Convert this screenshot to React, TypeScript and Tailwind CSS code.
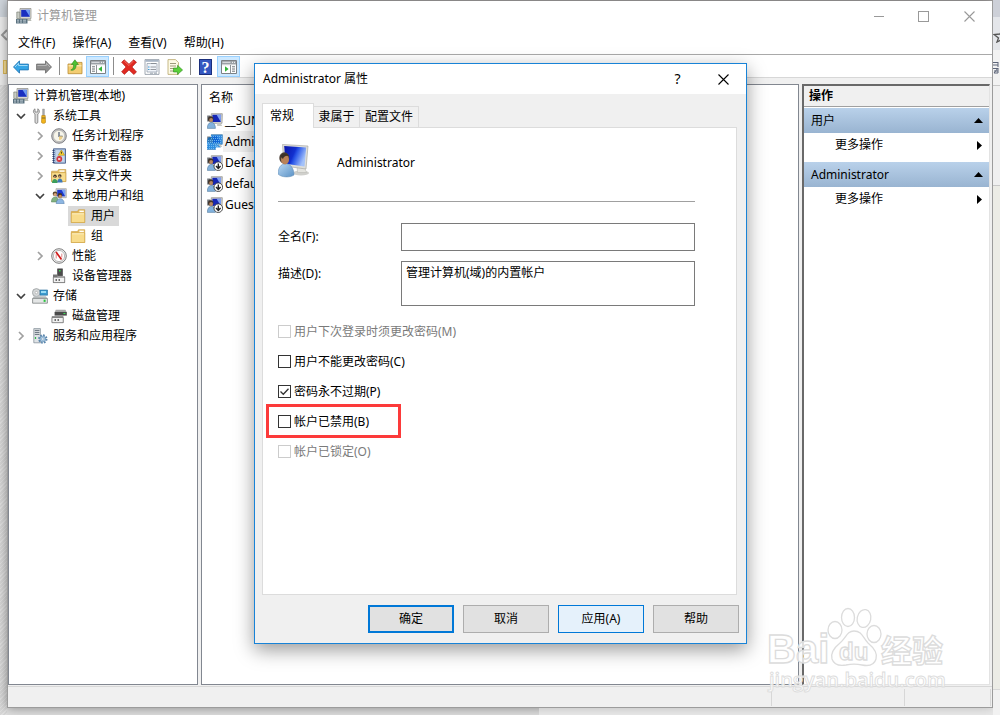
import { useState, type ReactNode } from "react";

/* ---------- icons ---------- */

function Svg({ children, size = "size-4" }: { children: ReactNode; size?: string }) {
  return (
    <svg viewBox="0 0 16 16" className={`${size} shrink-0`} aria-hidden="true">
      {children}
    </svg>
  );
}

function ComputerIcon() {
  return (
    <Svg>
      <path d="M4 .5h11v10H4z" fill="#d9d9d2" stroke="#8d8d86" strokeWidth=".7" />
      <path d="M5.2 1.8h8.6v7H5.2z" fill="#1a2fc0" />
      <path d="M9.5 1.8h4.3v7z" fill="#6f9bf2" />
      <path d="M10.5 10.5h4l1 2.5h-4z" fill="#b9bcb5" />
      <path d="M.8 4h3v6.5h-3z" fill="#c9ccc4" stroke="#6b7268" strokeWidth=".6" />
      <path d="M0 11h11.5v4.5H0z" fill="#5b7280" />
      <path d="M1 12.2h2M4 12.2h2M7 12.2h3M1 14h2M4 14h2M7 14h3" stroke="#c6d2d8" strokeWidth=".9" />
    </Svg>
  );
}

function ToolsIcon() {
  return (
    <Svg>
      <path d="M3 .8C1 2 .8 4.6 3 6v8.2c0 1.6 2.8 1.6 2.8 0V6C8 4.8 7.8 2 5.8.8V4H3z" fill="#dcdcdc" stroke="#777" strokeWidth=".8" />
      <path d="M10.6 1h1.8v6.5h-1.8z" fill="#aaa" stroke="#888" strokeWidth=".4" />
      <path d="M9.8 7.5h3.4l.3 6.8c0 1.4-4 1.4-4 0z" fill="#f2b41c" stroke="#b27c0b" strokeWidth=".6" />
      <path d="M9.8 10h3.6" stroke="#7c6a30" />
    </Svg>
  );
}

function ClockIcon() {
  return (
    <Svg>
      <circle cx="8" cy="8" r="7.3" fill="#c4c4c4" stroke="#77777c" strokeWidth=".9" />
      <circle cx="8" cy="8" r="5.6" fill="#f7f5ea" stroke="#9a9a9a" strokeWidth=".4" />
      <path d="M8 4v4.3h3.6" fill="none" stroke="#4e5a6e" strokeWidth="1.2" />
      <path d="M8 8.3h3.6A3.6 3.6 0 0 1 8 12z" fill="#efd18a" />
    </Svg>
  );
}

function EventIcon() {
  return (
    <Svg>
      <path d="M2.5.8h12v14.4h-12z" fill="#a9c1df" stroke="#4c628c" strokeWidth=".9" />
      <path d="M5 3h8M5 5h8M5 7h8M5 9h8M5 11h8M5 13h8" stroke="#e8f0fa" strokeWidth=".8" />
      <path d="M2.5 2v13" stroke="#2c3f6d" strokeWidth="2" strokeDasharray="1 1" />
      <path d="M10.4 2l3.2 5.2H7.2z" fill="#ffd42a" stroke="#a47d00" strokeWidth=".5" />
      <path d="M10.4 3.7v2" stroke="#222" strokeWidth=".9" />
      <circle cx="8.3" cy="11" r="2.9" fill="#d2353c" />
      <path d="M7.2 9.9l2.2 2.2m0-2.2l-2.2 2.2" stroke="#fff" strokeWidth=".9" />
    </Svg>
  );
}

function FolderIcon() {
  return (
    <Svg>
      <path d="M1.3 3.6h6.2l1-1.9h6.2v12.8H1.3z" fill="#e8bf5f" stroke="#c9993a" strokeWidth=".6" />
      <path d="M9.4 2.6h4.4v1.6H9.4z" fill="#fff" />
      <path d="M1.3 5h13.4v9.5H1.3z" fill="#f8dc8c" stroke="#cfa245" strokeWidth=".6" />
      <path d="M2 5.8h12" stroke="#fdf0c2" />
    </Svg>
  );
}

function SharedIcon() {
  return (
    <Svg>
      <path d="M.6 3.2h6l1-1.700h7.200v12H.6z" fill="#e9c46a" stroke="#c0933a" strokeWidth=".6" />
      <path d="M8.500 2.400h5v1.400h-5z" fill="#fff" />
      <path d="M.6 4.600h14.200v9H.6z" fill="#f8dc8c" stroke="#c79a3f" strokeWidth=".6" />
      <circle cx="4" cy="8.3" r="1.7" fill="#3d3328" />
      <circle cx="8.8" cy="7.9" r="1.7" fill="#3d3328" />
      <path d="M1 15c0-5.500 5.600-5.500 5.600 0z" fill="#3c9e5b" />
      <path d="M6.200 14.500c0-5.500 5.400-5.500 5.400 0z" fill="#3c78b8" />
      <circle cx="3.8" cy="8.9" r="1" fill="#c99466" />
      <circle cx="8.6" cy="8.5" r="1" fill="#c99466" />
    </Svg>
  );
}

function UsersIcon() {
  return (
    <Svg>
      <path d="M5 .7h10.3v9H5z" fill="#dfdfda" stroke="#92928c" strokeWidth=".6" />
      <path d="M6.2 1.8h8v6.6h-8z" fill="#1c37cc" />
      <path d="M10.5 1.8h3.7v6.6z" fill="#7ba3f4" />
      <circle cx="4" cy="5.7" r="2.3" fill="#5a452f" />
      <circle cx="4.2" cy="6.5" r="1.6" fill="#d9a578" />
      <path d="M.4 14c0-6.8 7-6.8 7 0z" fill="#83b281" stroke="#527e55" strokeWidth=".5" />
      <circle cx="9" cy="7.4" r="2.3" fill="#463626" />
      <circle cx="9.2" cy="8.3" r="1.6" fill="#c98e62" />
      <path d="M5.2 15.7c0-6.7 8-6.7 8 0z" fill="#8db6e2" stroke="#4f76a3" strokeWidth=".5" />
    </Svg>
  );
}

function GaugeIcon() {
  return (
    <Svg>
      <circle cx="8" cy="8" r="7.3" fill="#efefef" stroke="#6e6e6e" strokeWidth=".9" />
      <circle cx="8" cy="8" r="5.6" fill="#fff" stroke="#9c9c9c" strokeWidth=".7" />
      <path d="M5.200 10.500V6.200M10.800 9.500V5.600" fill="none" stroke="#d88" strokeWidth="1" />
      <path d="M5 4l5.500 7.500" stroke="#d01919" strokeWidth="1.7" />
    </Svg>
  );
}

function DeviceIcon() {
  return (
    <Svg>
      <path d="M6.5.8h5v7h-5z" fill="#4b4b4b" stroke="#2e2e2e" strokeWidth=".5" />
      <path d="M8.8 2v1.6" stroke="#3bdc4e" strokeWidth="1.5" />
      <path d="M2 6.6h4.5v2H14V15H2z" fill="#777" />
      <path d="M2.3 9.2h11.4v5.4H2.3z" fill="#f1f1f1" stroke="#6f6f6f" strokeWidth=".7" />
      <path d="M5.2 11v2M8.2 11v2" stroke="#4e4e4e" strokeWidth="1.2" />
    </Svg>
  );
}

function StorageIcon() {
  return (
    <Svg>
      <circle cx="4.4" cy="4.6" r="4" fill="#d4d7d8" stroke="#84898b" strokeWidth=".6" />
      <circle cx="4.4" cy="4.6" r="1.2" fill="#fff" stroke="#888" strokeWidth=".4" />
      <path d="M8 2h7.6v5.2H8z" fill="#3c9bcf" stroke="#226a99" strokeWidth=".6" />
      <path d="M9 3h5v2H9z" fill="#9bdcf5" />
      <path d="M1.8 8.3h12l1.6 2.2H.6z" fill="#b9bebf" />
      <path d="M.6 10.4h14.8v4.8H.6z" fill="#e4e6e6" stroke="#6d7273" strokeWidth=".7" />
      <path d="M11.6 11.6h2v2.3h-2z" fill="#2cc340" />
    </Svg>
  );
}

function DiskIcon() {
  return (
    <Svg>
      <path d="M4.8 1.8h9.6l1.4 2.4H3.6z" fill="#a5a5a5" />
      <path d="M3.6 4h12.2v3.6H3.6z" fill="#4a4a4a" />
      <path d="M12.4 5.5h2" stroke="#40e058" strokeWidth="1.1" />
      <path d="M.8 8.2h11.6v6.6H.8z" fill="#777" />
      <path d="M1 9.5h11.2v5.2H1z" fill="#f1f1f1" stroke="#6f6f6f" strokeWidth=".7" />
      <path d="M4.2 11v2M7.2 11v2" stroke="#4e4e4e" strokeWidth="1.2" />
    </Svg>
  );
}

function ServiceIcon() {
  return (
    <Svg>
      <path d="M1.8.6h6.6v14.2H1.8z" fill="#dfe3e6" stroke="#7b8791" strokeWidth=".7" />
      <path d="M2.8 2.4h4.6M2.8 4.4h4.6M2.8 6.4h4.6" stroke="#56636e" strokeWidth=".9" />
      <path d="M3.500 9v2" stroke="#33b64a" strokeWidth="1.2" />
      <circle cx="10.8" cy="11" r="3.6" fill="none" stroke="#5a86ad" strokeWidth="2.2" strokeDasharray="1.6 1.2" />
      <circle cx="10.8" cy="11" r="2.9" fill="#a8c8e2" stroke="#5a86ad" strokeWidth=".6" />
      <circle cx="10.8" cy="11" r="1.2" fill="#fff" stroke="#5a86ad" strokeWidth=".5" />
    </Svg>
  );
}

function UserIcon({ kind }: { kind: "plain" | "disabled" | "selected" }) {
  return (
    <Svg>
      <path d="M4.3.7H15.300l-.3 9.600H4.3z" fill="#d9d9d4" stroke="#8b8b86" strokeWidth=".7" />
      <path d="M5.400 1.800h8.700l-.3 7.300H5.400z" fill="#1526b5" />
      <path d="M9.600 1.800h4.500l-.3 7.300z" fill="#7f9ff2" />
      <path d="M10 10.300h3.600l1.600 2.600h-5z" fill="#c7c8c2" />
      <path d="M.2 2.500h3.200v6H.2z" fill="#3a3f46" opacity=".7" />
      <circle cx="3.7" cy="5.9" r="2.7" fill="#3f342b" />
      <circle cx="4.1" cy="7" r="1.9" fill="#b98863" />
      <path d="M.3 15.400C.3 7.300 8.400 7.300 8.400 15.400z" fill="#82b2dd" stroke="#4c7092" strokeWidth=".5" />
      {kind === "disabled" && (
        <>
          <circle cx="11.3" cy="11.2" r="4.300" fill="#fff" stroke="#3d3d3d" strokeWidth=".9" />
          <path d="M11.300 8.400v4.800M9 11.100l2.300 2.300 2.300-2.300" fill="none" stroke="#222" strokeWidth="1.400" />
        </>
      )}
      {kind === "selected" && (
        <>
          <path d="M4 .4h11.700v10H11l3 3H9v2.200H0V7l1-3.500 3-.5z" fill="#0f7fe0" opacity=".72" />
          <path
            d="M4 2.500h11M4 4.500h11M1 6.500h14M1 8.500h14M0 10.500h14M0 12.500h12M0 14.500h9"
            stroke="#7fc4f5"
            strokeWidth=".8"
            strokeDasharray="1 1"
          />
        </>
      )}
    </Svg>
  );
}

function LargeUserIcon() {
  return (
    <svg viewBox="0 0 34 40" className="h-10 w-[34px] shrink-0" aria-hidden="true">
      <defs>
        <linearGradient id="screen" x1="0" y1="0" x2="1" y2=".4">
          <stop offset="0" stopColor="#0a14a8" />
          <stop offset=".5" stopColor="#1230cf" />
          <stop offset=".62" stopColor="#2c58e8" />
          <stop offset="1" stopColor="#a4c2fa" />
        </linearGradient>
        <linearGradient id="shirt" x1="0" y1="0" x2="1" y2="1">
          <stop offset="0" stopColor="#b9d8f3" />
          <stop offset="1" stopColor="#5b92c6" />
        </linearGradient>
      </defs>
      <ellipse cx="23" cy="30" rx="8" ry="2.500" fill="#d0d0cc" />
      <path d="M19 23h7l2.500 6.500h-9z" fill="#e4e4df" stroke="#b4b4ae" strokeWidth=".5" />
      <path d="M4.500 1.500l25.500 1.500-2 23-22-3z" fill="#dededa" stroke="#a0a09a" strokeWidth=".6" />
      <path d="M6.200 3l22 1.400-1.700 19-19-2.700z" fill="url(#screen)" />
      <path d="M0 31c0-14.500 16-13.500 16 1-4 2.800-12.500 2.600-16-1z" fill="url(#shirt)" stroke="#5a86b0" strokeWidth=".5" />
      <ellipse cx="6.300" cy="15" rx="5" ry="5.800" fill="#4a3d34" />
      <ellipse cx="7" cy="16.700" rx="4" ry="4.800" fill="#b98259" />
      <path d="M2.500 13.500c1.500-4 7-4 8.500-.5-3-1-5.500.5-6 3z" fill="#3d322a" />
    </svg>
  );
}

function ArrowIcon({ forward = false }: { forward?: boolean }) {
  return forward ? (
    <Svg>
      <path d="M15.500 8L9.500 1.800v3.300H.6v5.800h8.900v3.300z" fill="#8e8e8e" stroke="#686868" strokeWidth=".8" />
      <path d="M1.400 6.500h9V4.300L14 8" fill="none" stroke="#bbb" strokeWidth=".9" />
    </Svg>
  ) : (
    <Svg>
      <path d="M.5 8l6-6.200v3.300h8.900v5.800H6.500v3.300z" fill="#35a5e5" stroke="#1c6fae" strokeWidth=".8" />
      <path d="M14.600 6.500h-9V4.300L2 8" fill="none" stroke="#a9e0fb" strokeWidth=".9" />
    </Svg>
  );
}

function UpFolderIcon() {
  return (
    <Svg>
      <path d="M1 5h5l1-1.600h8v11.300H1z" fill="#f3cd72" stroke="#b98c32" strokeWidth=".8" />
      <path d="M1.500 6.800h13" stroke="#fdf0c0" />
      <path d="M3.800 11c2.400-.6 3-3 2.800-5.500H4.400L7.900.8l3.500 4.700H9.200c0 4-2 6.500-5.400 5.500z" fill="#4fc234" stroke="#2c861c" strokeWidth=".6" />
    </Svg>
  );
}

function PaneIcon({ right = false }: { right?: boolean }) {
  return (
    <Svg>
      <path d="M.5 1.500h15v13H.5z" fill="#fff" stroke="#7c8185" />
      <path d="M1 2h14v3H1z" fill="#9ba1a6" />
      <path d="M1.500 3.300h8" stroke="#e4e7e9" />
      <path d="M11 3.300h1M13 3.300h1" stroke="#fff" />
      <path d="M1 5.700h14" stroke="#c4c8cb" />
      {right ? (
        <>
          <path d="M9.500 6v8.500" stroke="#8f9498" />
          <path d="M11 7.800h3M11 10h3M11 12.200h3" stroke="#6e7478" />
          <path d="M4 7.200v5.600l3.600-2.800z" fill="#31b338" />
        </>
      ) : (
        <>
          <path d="M6.500 6v8.500" stroke="#8f9498" />
          <path d="M2 7.800h3M2 10h3M2 12.200h3" stroke="#6e7478" />
          <path d="M12 7.200v5.600L8.400 10z" fill="#31b338" />
        </>
      )}
    </Svg>
  );
}

function DeleteIcon() {
  return (
    <Svg>
      <path
        d="M3.200.8L8 5.200 12.600.8l2.900 2.400L11 8l4.500 5-2.700 2.500L8 10.900l-4.600 4.500L.6 12.800 5 8 .6 3.300z"
        fill="#e02a22"
        stroke="#a81410"
        strokeWidth=".6"
      />
      <path d="M3.200 2l4.800 4.500L12.400 2" fill="none" stroke="#f47c70" strokeWidth=".8" />
    </Svg>
  );
}

function PropertiesIcon() {
  return (
    <Svg>
      <path d="M1 .6h14v14.800H1z" fill="#fff" stroke="#8993a0" strokeWidth=".8" />
      <path d="M1.400 1h13.200v1.800H1.400z" fill="#a7b4c4" />
      <path d="M3 4.500h10v8.500H3z" fill="#f1f5fa" stroke="#8b96a3" strokeWidth=".7" />
      <path d="M7 4.500h5" stroke="#8a8f96" />
      <path d="M4 8h1.500M4 10.500h1.500" stroke="#3e9bd2" />
      <path d="M6.500 8h5.500M6.500 10.500h5.500" stroke="#8a8f96" strokeWidth=".9" />
      <path d="M6 14.200h3M10 14.200h3" stroke="#9aa5b0" />
    </Svg>
  );
}

function ExportIcon() {
  return (
    <Svg>
      <path d="M1 .6h7.500l3 3v11.800H1z" fill="#fdfae6" stroke="#b7a76b" strokeWidth=".8" />
      <path d="M3 4.500h6M3 7h6M3 9.500h4M3 12h4" stroke="#93906f" strokeWidth=".9" />
      <path d="M6.500 9h4V6.300L15.600 11l-5.100 4.500V13h-4z" fill="#5bd03a" stroke="#2d8c1f" strokeWidth=".6" />
    </Svg>
  );
}

function HelpIcon() {
  return (
    <span aria-hidden="true" className="grid h-4 w-[13px] place-items-center border border-[#1b2f7c] bg-[#3557c0] font-['Liberation_Serif',serif] text-base/4 font-bold text-white">
      ?
    </span>
  );
}

function Chevron({ open }: { open: boolean }) {
  return (
    <svg viewBox="0 0 10 10" className="size-2.5" aria-hidden="true">
      {open ? (
        <path d="M1 3l4 4 4-4" fill="none" stroke="#404040" strokeWidth="1.700" />
      ) : (
        <path d="M3 1l4 4-4 4" fill="none" stroke="#a0a0a0" strokeWidth="1.700" />
      )}
    </svg>
  );
}

function CloseGlyph() {
  return (
    <svg viewBox="0 0 11 11" className="size-[11px]" aria-hidden="true">
      <path d="M.5.5l10 10m0-10l-10 10" stroke="currentColor" strokeWidth="1.100" />
    </svg>
  );
}

/* ---------- tree ---------- */

type Node = { label: string; level: number; icon: ReactNode; open?: boolean; selected?: boolean };

const nodes: Node[] = [
  { label: "系统工具", level: 1, icon: <ToolsIcon />, open: true },
  { label: "任务计划程序", level: 2, icon: <ClockIcon />, open: false },
  { label: "事件查看器", level: 2, icon: <EventIcon />, open: false },
  { label: "共享文件夹", level: 2, icon: <SharedIcon />, open: false },
  { label: "本地用户和组", level: 2, icon: <UsersIcon />, open: true },
  { label: "用户", level: 3, icon: <FolderIcon />, selected: true },
  { label: "组", level: 3, icon: <FolderIcon /> },
  { label: "性能", level: 2, icon: <GaugeIcon />, open: false },
  { label: "设备管理器", level: 2, icon: <DeviceIcon /> },
  { label: "存储", level: 1, icon: <StorageIcon />, open: true },
  { label: "磁盘管理", level: 2, icon: <DiskIcon /> },
  { label: "服务和应用程序", level: 1, icon: <ServiceIcon />, open: false },
];

const indents = ["", "pl-0.5", "pl-[21px]", "pl-10"];

function Tree() {
  return (
    <nav aria-label="控制台树" className="w-[190px] shrink-0 border border-[#828790] bg-white pt-px">
      <div className="flex h-5 items-center gap-[5px] pl-1">
        <ComputerIcon />
        计算机管理(本地)
      </div>
      <ul>
        {nodes.map((n) => (
          <li key={n.label} className={`flex h-5 items-center ${indents[n.level]}`}>
            <span className="grid w-[19px] place-items-center">
              {n.open !== undefined && <Chevron open={n.open} />}
            </span>
            <span className={`flex h-5 items-center gap-[5px] pr-1 pl-0.5 ${n.selected ? "bg-[#d9d9d9]" : ""}`}>
              {n.icon}
              {n.label}
            </span>
          </li>
        ))}
      </ul>
    </nav>
  );
}

/* ---------- user list ---------- */

const users: { name: string; kind: "plain" | "disabled" | "selected" }[] = [
  { name: "__SUN", kind: "plain" },
  { name: "Admi", kind: "selected" },
  { name: "Defau", kind: "disabled" },
  { name: "defau", kind: "disabled" },
  { name: "Guest", kind: "disabled" },
];

function UserList() {
  return (
    <section className="min-w-0 flex-1 border border-[#828790] bg-white">
      <table className="w-full border-collapse text-left">
        <thead>
          <tr className="h-[25px]">
            <th className="pl-[7px] font-normal">名称</th>
          </tr>
        </thead>
        <tbody>
          {users.map((u) => (
            <tr key={u.name} className="h-[21px]">
              <td className="p-0 pl-[5px]">
                <span className="flex h-[21px] items-center">
                  <UserIcon kind={u.kind} />
                  <span className={`flex h-[21px] items-center pl-0.5 ${u.kind === "selected" ? "w-24 bg-[#f0f0f0]" : ""}`}>
                    {u.name}
                  </span>
                </span>
              </td>
            </tr>
          ))}
        </tbody>
      </table>
    </section>
  );
}

/* ---------- actions ---------- */

function ActionGroup({ title }: { title: string }) {
  return (
    <section className="mb-[5px]">
      <button type="button" className="flex h-[25px] w-full items-center justify-between bg-linear-to-b from-[#b9d1ea] to-[#99b4d1] pr-1.5 pl-[7px]">
        {title}
        <svg viewBox="0 0 9 5" className="h-[5px] w-[9px]" aria-hidden="true">
          <path d="M0 5l4.500-5L9 5z" />
        </svg>
      </button>
      <button type="button" className="flex h-6 w-full items-center justify-between pr-[7px] pl-[31px]">
        更多操作
        <svg viewBox="0 0 5 9" className="h-[9px] w-[5px]" aria-hidden="true">
          <path d="M0 0l5 4.500L0 9z" />
        </svg>
      </button>
    </section>
  );
}

function Actions() {
  return (
    <aside className="mr-0.5 w-[188px] shrink-0 border-t-2 border-r border-b border-l-2 border-t-[#696969] border-r-[#e3e3e3] border-b-[#e3e3e3] border-l-[#696969] bg-white">
      <h2 className="mb-px flex h-[21px] items-center border-b border-[#a0a0a0] bg-[#f0f0f0] pl-[5px] font-bold">操作</h2>
      <ActionGroup title="用户" />
      <ActionGroup title="Administrator" />
    </aside>
  );
}

/* ---------- dialog ---------- */

type Option = { id: string; label: string; checked?: boolean; disabled?: boolean; marked?: boolean };

const options: Option[] = [
  { id: "must-change", label: "用户下次登录时须更改密码(M)", disabled: true },
  { id: "cannot-change", label: "用户不能更改密码(C)" },
  { id: "never-expires", label: "密码永不过期(P)", checked: true },
  { id: "account-disabled", label: "帐户已禁用(B)", marked: true },
  { id: "account-locked", label: "帐户已锁定(O)", disabled: true },
];

function CheckRow({ option }: { option: Option }) {
  return (
    <div className="relative flex h-[30px] items-center gap-[3px]">
      <span className="grid size-[13px]">
        <input
          id={option.id}
          type="checkbox"
          defaultChecked={option.checked}
          disabled={option.disabled}
          className="peer col-start-1 row-start-1 size-[13px] appearance-none border border-[#333] bg-white disabled:border-[#ccc]"
        />
        <svg viewBox="0 0 13 13" className="pointer-events-none col-start-1 row-start-1 size-[13px] opacity-0 peer-checked:opacity-100" aria-hidden="true">
          <path d="M2.500 6.500l2.800 2.800 5.200-5.600" fill="none" stroke="#333" strokeWidth="1.300" />
        </svg>
      </span>
      <label htmlFor={option.id} className={`pt-px ${option.disabled ? "text-[#7a7a7a]" : ""}`}>
        {option.label}
      </label>
      {option.marked && <span className="pointer-events-none absolute -top-0.5 -left-3 h-[34px] w-[135px] border-3 border-[#fc3a3a]" />}
    </div>
  );
}

const buttonBase = "h-7 w-[86px]";

function PropertiesDialog() {
  const [fullName, setFullName] = useState("");
  const [description, setDescription] = useState("管理计算机(域)的内置帐户");
  return (
    <div
      role="dialog"
      aria-labelledby="dialog-title"
      className="absolute top-[63px] left-[254px] w-[493px] border border-[#1883d7] bg-[#f0f0f0] shadow-[0_6px_18px_rgba(0,0,0,0.4)]"
    >
      <header className="flex h-[30px] items-center bg-white pl-2">
        <h2 id="dialog-title" className="flex-1">Administrator 属性</h2>
        <button type="button" aria-label="帮助" className="h-full w-[45px] text-sm">?</button>
        <button type="button" aria-label="关闭" className="grid h-full w-[46px] place-items-center"><CloseGlyph /></button>
      </header>

      <div className="pt-[9px] pr-[9px] pl-[7px]">
        <div role="tablist" className="flex items-end">
          <button type="button" role="tab" aria-selected="true" className="relative -mb-px h-[25px] w-[52px] border border-b-0 border-[#dcdcdc] bg-white pr-3">常规</button>
          <button type="button" role="tab" aria-selected="false" className="h-[21px] w-[46px] border border-b-0 border-l-0 border-[#dcdcdc]">隶属于</button>
          <button type="button" role="tab" aria-selected="false" className="h-[21px] w-[59px] border border-b-0 border-l-0 border-[#dcdcdc]">配置文件</button>
        </div>
        <div role="tabpanel" className="border border-[#dcdcdc] bg-white pt-[15px] pr-[41px] pb-32 pl-[15px]">
          <div className="flex items-center gap-[25px] border-b border-[#a0a0a0] pb-[18px]">
            <LargeUserIcon />
            Administrator
          </div>
          <div className="mt-[21px] flex items-center">
            <label htmlFor="full-name" className="w-[123px] shrink-0">全名(F):</label>
            <input
              id="full-name"
              value={fullName}
              onChange={(e) => setFullName(e.target.value)}
              className="h-7 min-w-0 flex-1 border border-[#7a7a7a] bg-white px-1 outline-none"
            />
          </div>
          <div className="mt-2.5 flex items-start">
            <label htmlFor="description" className="w-[123px] shrink-0 pt-[5px]">描述(D):</label>
            <textarea
              id="description"
              value={description}
              onChange={(e) => setDescription(e.target.value)}
              className="h-[45px] min-w-0 flex-1 resize-none border border-[#7a7a7a] bg-white px-1 pt-[3px] outline-none"
            />
          </div>
          <div className="mt-2.5">
            {options.map((o) => (
              <CheckRow key={o.id} option={o} />
            ))}
          </div>
        </div>
      </div>

      <footer className="flex justify-end gap-[9px] py-2.5 pr-[7px]">
        <button type="button" className={`${buttonBase} border-2 border-[#0078d7] bg-[#e1e1e1]`}>确定</button>
        <button type="button" className={`${buttonBase} border border-[#adadad] bg-[#e1e1e1]`}>取消</button>
        <button type="button" className={`${buttonBase} border border-[#0078d7] bg-[#e5f1fb]`}>应用(A)</button>
        <button type="button" className={`${buttonBase} border border-[#adadad] bg-[#e1e1e1]`}>帮助</button>
      </footer>
    </div>
  );
}

/* ---------- toolbar ---------- */

function Tool({ label, pressed, children }: { label: string; pressed?: boolean; children: ReactNode }) {
  return (
    <button
      type="button"
      aria-label={label}
      className={`grid h-[21px] w-[23px] place-items-center border ${pressed ? "border-[#99d1ff] bg-[#cce8ff]" : "border-transparent"}`}
    >
      {children}
    </button>
  );
}

function Separator() {
  return (
    <span className="flex w-2 justify-center self-center">
      <span className="h-[18px] w-px bg-[#8c8c8c]" />
    </span>
  );
}

function Toolbar() {
  return (
    <div className="flex h-[23px] items-end border-b border-[#d7d7d7] pl-px">
      <Tool label="后退"><ArrowIcon /></Tool>
      <Tool label="前进"><ArrowIcon forward /></Tool>
      <Separator />
      <Tool label="向上"><UpFolderIcon /></Tool>
      <Tool label="显示/隐藏控制台树" pressed><PaneIcon /></Tool>
      <Separator />
      <Tool label="删除"><DeleteIcon /></Tool>
      <Tool label="属性"><PropertiesIcon /></Tool>
      <Tool label="导出列表"><ExportIcon /></Tool>
      <Separator />
      <Tool label="帮助"><HelpIcon /></Tool>
      <Tool label="显示/隐藏操作窗格" pressed><PaneIcon right /></Tool>
    </div>
  );
}

/* ---------- watermark ---------- */

function Watermark() {
  return (
    <svg
      viewBox="0 0 184 92"
      className="pointer-events-none absolute right-[50px] bottom-[18px] h-[92px] w-[184px]"
      fill="#fff"
      fillOpacity=".8"
      stroke="#dcdcdc"
      strokeWidth="1.300"
      aria-label="Baidu 经验"
    >
      <text x="1" y="58" fontSize="40" fontWeight="700" fontFamily="Liberation Sans, sans-serif">Bai</text>
      <ellipse cx="69" cy="25" rx="7" ry="8.500" />
      <ellipse cx="82" cy="12.500" rx="6.500" ry="9" />
      <ellipse cx="98" cy="13.500" rx="6.800" ry="9" transform="rotate(12 98 13.500)" />
      <ellipse cx="108" cy="29" rx="7" ry="8.500" />
      <path d="M88 26c8 0 9 7 14 12 6 5 10 10 8 16-2 7-9 7-14 6-5-1-11-1-16 0-6 1-12 0-14-6-2-7 3-12 8-16 6-5 7-12 14-12z" />
      <text x="73" y="55" fontSize="24" fontWeight="700" fontFamily="Liberation Sans, sans-serif">du</text>
      <text x="115" y="57" fontSize="31" fontWeight="700" fontFamily="Noto Sans CJK SC, sans-serif">经验</text>
      <text x="3" y="82" fontSize="20" fontWeight="600" fontFamily="Open Sans, sans-serif" strokeWidth=".9">jingyan.baidu.com</text>
    </svg>
  );
}

/* ---------- page ---------- */

export default function App() {
  return (
    <div className="relative flex min-h-screen overflow-hidden bg-[#dedede] font-['Noto_Sans','Noto_Sans_CJK_SC',sans-serif] text-xs/4 text-black">
      <div className="flex w-[7px] shrink-0 flex-col overflow-hidden bg-[#d9d9d9]" aria-hidden="true">
        <div className="h-[17px] bg-[#cfd5dc]" />
        <div className="flex h-[68px] flex-col bg-[#ececec]">
          <svg viewBox="0 0 7 12" className="mt-3 h-3 w-[7px]">
            <path d="M7 1L2 6l5 5" fill="none" stroke="#9a9a9a" strokeWidth="2" />
          </svg>
          <div className="mt-[19px] ml-[3px] h-3.5 border border-[#dcb95c] bg-[#f8df95]" />
        </div>
        <div className="flex-1 bg-[repeating-linear-gradient(135deg,#d6d6d6_0px,#d6d6d6_2px,#e0e0e0_2px,#e0e0e0_3px)]" />
      </div>

      <div className="flex min-w-0 flex-1 flex-col">
        <div className="h-px bg-[#a9a6a6]" />
        <div className="flex flex-1 flex-col border border-t-0 border-[#9c9c9c] bg-[#f0f0f0] shadow-[0_0_10px_rgba(0,0,0,0.4)]">
          <header className="flex h-[30px] items-center bg-white pl-2 text-[#999]">
            <ComputerIcon />
            <h1 className="flex-1 pl-[5px]">计算机管理</h1>
            <button type="button" aria-label="最小化" className="grid h-full w-[45px] place-items-center">
              <span className="h-px w-2.5 bg-[#999]" />
            </button>
            <button type="button" aria-label="最大化" className="grid h-full w-[45px] place-items-center">
              <span className="size-[11px] border border-[#999]" />
            </button>
            <button type="button" aria-label="关闭" className="grid h-full w-[46px] place-items-center"><CloseGlyph /></button>
          </header>
          <div className="flex h-6 items-center gap-[17px] border-b border-[#a9a9a9] bg-white pl-2.5">
            <button type="button">文件(F)</button>
            <button type="button">操作(A)</button>
            <button type="button">查看(V)</button>
            <button type="button">帮助(H)</button>
          </div>
          <div className="bg-white"><Toolbar /></div>
          <main className="flex flex-1 gap-[3px] pt-1.5">
            <Tree />
            <UserList />
            <Actions />
          </main>
          <footer className="mt-px flex h-[21px] justify-end border-t border-[#d7d7d7] pt-0.5 pr-px pb-px">
            <span className="w-[133px] border-l border-[#d7d7d7]" />
            <span className="w-[87px] border-x border-[#d7d7d7]" />
          </footer>
        </div>
        <div className="flex h-[7px]">
          <div className="flex-[54]" />
          <div className="flex-[46] bg-[#f4f4f4]/50" />
        </div>
      </div>

      <div className="flex w-[7px] shrink-0 flex-col overflow-hidden bg-[#ecece6]" aria-hidden="true">
        <div className="h-[17px] bg-[#cdd0d8]" />
        <div className="h-[33px] bg-[#e4e6ea] pt-3">
          <svg viewBox="0 0 7 14" className="h-3.5 w-[7px]">
            <path d="M9 1L7 5 1 5.500l4.500 3.500L4 13l5-2.500" fill="none" stroke="#555" strokeWidth="1.300" />
          </svg>
        </div>
        <div className="h-9 border-b border-[#c8c8c8] bg-[#f2f2f2] pt-3">
          <svg viewBox="0 0 7 12" className="h-3 w-[7px]">
            <path d="M0 .5h5M0 3h5M5 0v5M0 6.500h5M1 9h4M5 6v5H1z" fill="none" stroke="#5c6478" />
          </svg>
        </div>
        <div className="h-[100px] border-b border-[#c8c8c8] bg-[#f0f0f0]" />
        <div className="flex-1" />
        <div className="h-[26px] border-t border-[#d8d8d8] bg-[#f2f2f2]" />
      </div>

      <PropertiesDialog />
      <Watermark />
    </div>
  );
}
